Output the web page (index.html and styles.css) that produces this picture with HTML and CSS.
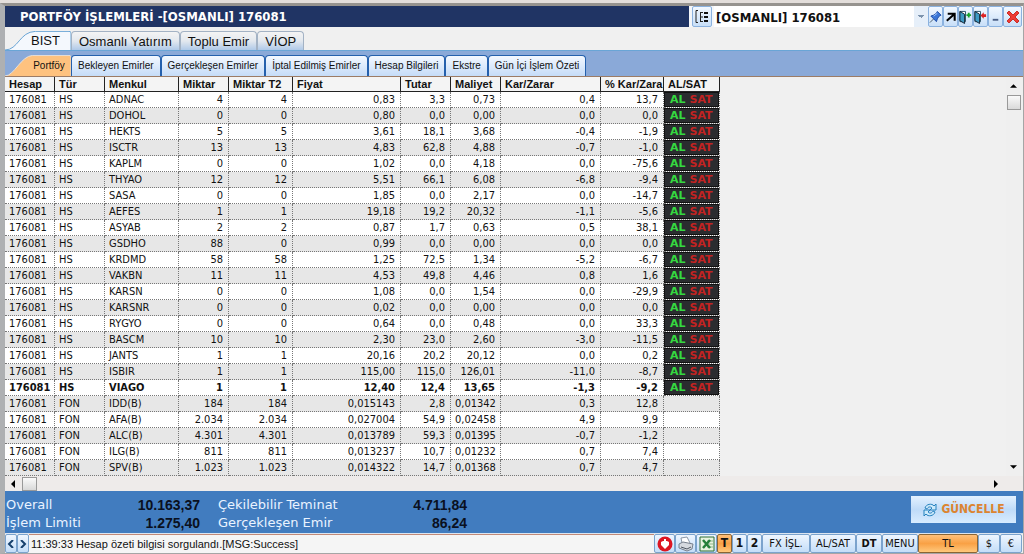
FILE: index.html
```html
<!DOCTYPE html>
<html lang="tr">
<head>
<meta charset="utf-8">
<title>Portföy İşlemleri</title>
<link rel="stylesheet" href="styles.css">
</head>
<body>
<main class="window">
  <header class="titlebar">
    <h1 class="title">PORTFÖY İŞLEMLERİ -[OSMANLI] 176081</h1>
    <button class="tool tree" aria-label="Hesap listesi"><svg viewBox="0 0 14 14" width="14" height="14"><path d="M3 .5H1v12h2M5 2.500h3M5 7h3M5 11.500h3M5.500 2v10" fill="none" stroke="#222"/><path d="M9 3h4M9 7h4M9 11h4" stroke="#111" stroke-width="2"/></svg></button>
    <select class="account" aria-label="Hesap"><option>[OSMANLI] 176081</option></select>
    <button class="tool" aria-label="Sabitle"><svg viewBox="0 0 14 16" width="13" height="16"><path d="M1 14l4-4" stroke="#456"/><path d="M2 7l3-1 3-2 1-2 4 4-2 1-2 3-1 3z" fill="#3a76d8" stroke="#1c4ba5"/><path d="M5 7l4-3" stroke="#a8ccff"/></svg></button>
    <button class="tool" aria-label="Ayır"><svg viewBox="0 0 14 16" width="13" height="16"><path d="M3 12l8-7M4 4.500h7.500V12" fill="none" stroke="#000" stroke-width="2.200"/></svg></button>
    <button class="tool" aria-label="Giriş"><svg viewBox="0 0 14 16" width="13" height="16"><path d="M1 2h6v11H1z" fill="#fff" stroke="#244e63"/><path d="M1 2l5 3v10l-5-3z" fill="#3f9bc4" stroke="#123"/><path d="M8 6h5M10.500 3.500v5" stroke="#15a32a" stroke-width="2"/></svg></button>
    <button class="tool" aria-label="Çıkış"><svg viewBox="0 0 14 16" width="13" height="16"><path d="M1 2h6v11H1z" fill="#fff" stroke="#244e63"/><path d="M1 2l5 3v10l-5-3z" fill="#3f9bc4" stroke="#123"/><path d="M10.500 3L7 6.500l3.500 3.500V8H13V5h-2.500z" fill="#d22"/></svg></button>
    <button class="tool" aria-label="Küçült"><svg viewBox="0 0 14 16" width="13" height="16"><path d="M4 11h6" stroke="#4a5f86" stroke-width="2"/></svg></button>
    <button class="tool close" aria-label="Kapat"><svg viewBox="0 0 16 16" width="16" height="16"><path d="M2 4l2-2 4 4 4-4 2 2-4 4 4 4-2 2-4-4-4 4-2-2 4-4z" fill="#ee3b35" stroke="#c8302b"/></svg></button>
  </header>
  <nav class="tabs">
    <button class="tab current"><svg class="slant" viewBox="0 0 100 100" preserveAspectRatio="none"><path d="M0 100C20 100 22 4 46 2H97Q100 2 100 10V100"/></svg><span>BIST</span></button>
    <button class="tab">Osmanlı Yatırım</button>
    <button class="tab">Toplu Emir</button>
    <button class="tab">VİOP</button>
  </nav>
  <nav class="subtabs">
    <button class="sub current"><svg class="slant" viewBox="0 0 100 100" preserveAspectRatio="none"><path d="M0 100C14 100 24 4 42 2H97Q100 2 100 10V100"/></svg><span>Portföy</span></button>
    <button class="sub">Bekleyen Emirler</button>
    <button class="sub">Gerçekleşen Emirler</button>
    <button class="sub">İptal Edilmiş Emirler</button>
    <button class="sub">Hesap Bilgileri</button>
    <button class="sub">Ekstre</button>
    <button class="sub">Gün İçi İşlem Özeti</button>
  </nav>
  <section class="grid">
    <div class="sheet">
      <table>
        <colgroup><col class="w50"><col class="w50"><col class="w74"><col class="w50"><col class="w64"><col class="w108"><col class="w50"><col class="w50"><col class="w100"><col class="w63"><col class="w56"></colgroup>
        <thead><tr><th>Hesap</th><th>Tür</th><th>Menkul</th><th>Miktar</th><th>Miktar T2</th><th>Fiyat</th><th>Tutar</th><th>Maliyet</th><th>Kar/Zarar</th><th>% Kar/Zara</th><th>AL/SAT</th></tr></thead>
        <tbody id="rows"></tbody>
      </table>
    </div>
    <div class="vscroll"><svg class="arrow" viewBox="0 0 8 5"><path d="M0 5l4-4 4 4z"/></svg><i class="thumb"></i><svg class="arrow end" viewBox="0 0 8 5"><path d="M0 0l4 4 4-4z"/></svg></div>
  </section>
  <div class="hscroll"><svg class="side" viewBox="0 0 5 8"><path d="M5 0L1 4l4 4z"/></svg><i class="thumb"></i><svg class="side end" viewBox="0 0 5 8"><path d="M0 0l4 4-4 4z"/></svg></div>
  <section class="summary">
    <dl>
      <dt>Overall</dt><dd>10.163,37</dd><dt>Çekilebilir Teminat</dt><dd>4.711,84</dd>
      <dt>İşlem Limiti</dt><dd>1.275,40</dd><dt>Gerçekleşen Emir</dt><dd>86,24</dd>
    </dl>
    <button class="refresh"><svg viewBox="0 0 16 16" width="16" height="16"><path d="M3 6c1-4 7-5 9-2l2-2v6H8l2-2C8 4 6 5 5 7zM13 10c-1 4-7 5-9 2l-2 2V8h6l-2 2c2 2 4 1 5-1z" fill="#cdeafb" stroke="#2380bd"/></svg>GÜNCELLE</button>
  </section>
  <footer class="status">
    <button class="nav" aria-label="Önceki"><svg viewBox="0 0 8 8" width="8" height="8"><path d="M6 0L2 4l4 4" fill="none" stroke="#16406c" stroke-width="2"/></svg></button>
    <button class="nav" aria-label="Sonraki"><svg viewBox="0 0 8 8" width="8" height="8"><path d="M2 0l4 4-4 4" fill="none" stroke="#16406c" stroke-width="2"/></svg></button>
    <output class="message">11:39:33 Hesap özeti bilgisi sorgulandı.[MSG:Success]</output>
    <button class="b w21" aria-label="Bildirim"><svg viewBox="0 0 16 16" width="16" height="16"><circle cx="8" cy="8" r="7.500" fill="#dd1522"/><path d="M8 13L4 9V6l2-1h1V3h2v2h1l2 1v3z" fill="#fff"/></svg></button>
    <button class="b w21" aria-label="Yazdır"><svg viewBox="0 0 16 16" width="16" height="16"><path d="M4 7L3 2l6-1 3 6" fill="#fff" stroke="#8b96a5"/><path d="M1 8l4-2 10 2-1 5-5 2-8-3z" fill="#d5d9df" stroke="#77808d"/><path d="M3 11l6 2 4-2" fill="none" stroke="#4d5560"/></svg></button>
    <button class="b w21" aria-label="Excel"><svg viewBox="0 0 16 16" width="16" height="16"><path d="M1 1h14v14H1z" fill="#e8f3df" stroke="#2f6e35"/><path d="M8 5h6M8 8h6M8 11h6" stroke="#8db68a"/><path d="M4 4l7 8M11 4l-7 8" stroke="#26803a" stroke-width="2.500"/></svg></button>
    <button class="b num on">T</button>
    <button class="b num">1</button>
    <button class="b num">2</button>
    <button class="b w48">FX İŞL.</button>
    <button class="b w46">AL/SAT</button>
    <button class="b w26 bold">DT</button>
    <button class="b w36">MENU</button>
    <button class="b w60 on">TL</button>
    <button class="b w22">$</button>
    <button class="b w22">€</button>
  </footer>
</main>
<script src="rows.js"></script>
</body>
</html>
```
FILE: styles.css
```css
* { box-sizing: border-box; }
body { margin: 0; padding-top: 3px; background: #e3dedb; color: #111; font: 11px/15px "DejaVu Sans Condensed", "Open Sans", sans-serif; }
button, select, output { font: inherit; color: inherit; }
button { padding: 0; border: 0; background: none; white-space: nowrap; }
.window { display: flex; flex-direction: column; min-height: calc(100vh - 3px); border: 1px solid #a5a5a5; border-top: 3px solid #96938f; border-left: 5px solid #aeb0b2; background: #f0f0f0; }

.titlebar { display: flex; height: 21px; padding-right: 1px; background: #f4f6f9; }
.title { flex: 1; margin: 0; padding-left: 15px; background: #203464; color: #fff; font: bold 13px/22px "DejaVu Sans Condensed", sans-serif; white-space: nowrap; }
.tool { display: grid; place-items: center; width: 15px; border: 1px solid #8bb2df; border-radius: 2px; background: linear-gradient(#f2f8ff, #c8dff8); }
.tool.tree { width: 20px; margin: 0 2px 0 3px; }
.tool.close { width: 19px; }
.account { width: 214px; padding: 1px 14px 0 2px; border: 0; border-radius: 0; appearance: none; font-weight: bold; font-size: 13px;
  background: conic-gradient(from -45deg at 50% 100%, #7c93ad 90deg, transparent 0) right 4px center / 6px 3px no-repeat, linear-gradient(#e6eff9, #e6eff9) right / 14px 100% no-repeat, #fff; }

.tabs { display: flex; height: 24px; padding-top: 4px; border-bottom: 1px solid #69a5d6; font: 13px/20px "Liberation Sans", sans-serif; }
.tab { padding: 0 7px; border: 1px solid #a3b2c4; border-bottom: 0; border-radius: 4px 4px 0 0; background: linear-gradient(#f4f4f4, #e3e8ee 50%, #afc9e8); }
.slant { position: absolute; inset: 0; width: 100%; height: 100%; }
.slant path { stroke: #69a5d6; vector-effect: non-scaling-stroke; fill: #f4f8fd; }
.current { position: relative; border: 0; background: none; }
.current span { position: relative; }
.tab.current { width: 66px; padding: 0 0 0 15px; }
.subtabs { display: flex; height: 26px; padding-top: 4px; background: #8aa9d8; border-bottom: 1px solid #9c7c66; font: 10px/20px "Liberation Sans", sans-serif; }
.sub { padding: 0 6px; border: 1px solid #2460ad; border-bottom: 0; border-radius: 4px 4px 0 0; background: linear-gradient(#f3f8ff, #c5dcf8); }
.sub.current { width: 66px; padding: 0 0 0 22px; border: 0; background: none; }
.sub .slant path { fill: #fec27f; stroke: #e8e1da; }

.grid { display: flex; flex: 1; }
.sheet { flex: 1; min-width: 0; }
table { width: 715px; table-layout: fixed; border-collapse: separate; border-spacing: 0; }
.w50 { width: 50px; } .w74 { width: 74px; } .w64 { width: 64px; } .w108 { width: 108px; } .w100 { width: 100px; } .w63 { width: 63px; } .w56 { width: 56px; }
th { height: 15px; padding: 0 0 0 4px; border-right: 1px solid #222; border-bottom: 1px solid #222; background: #f4f4f4; white-space: nowrap; text-align: left; font: bold 11px/14px "Liberation Sans", sans-serif; }
td { height: 16px; padding: 0 5px 0 4px; border-right: 1px dotted #777; border-bottom: 1px dotted #777; background: #fff; white-space: nowrap; text-align: right; }
td:nth-child(-n+3) { text-align: left; padding-right: 0; }
tr:nth-child(even) td { background: #e7e7e7; }
.bold td, .bold { font-weight: bold; }
td.trade { padding: 0; }
.deal { display: flex; gap: 4px; height: 15px; padding-left: 5px; border: 1px solid #111; background: #2a2c2f; font: 11px/13px "DejaVu Sans", sans-serif; }
.buy { color: #35d940; font-weight: bold; }
.sell { color: #c32322; font-weight: bold; }
.vscroll { display: flex; flex-direction: column; align-items: center; width: 17px; padding: 6px 2px 6px 0; background: #efefef; }
.arrow { width: 7px; height: 5px; }
.side { width: 5px; height: 8px; }
.thumb { border: 1px solid #999; background: linear-gradient(#fafafa, #d9d9d9); }
.vscroll .thumb { width: 14px; height: 15px; margin-top: 7px; }
.vscroll .end { margin-top: auto; }
.hscroll { display: flex; align-items: center; height: 15px; padding: 0 24px 0 5px; background: #eeebea; }
.hscroll .thumb { width: 15px; height: 14px; margin-left: 7px; }
.hscroll .end { margin-left: auto; }

.summary { display: flex; justify-content: space-between; align-items: flex-start; height: 43px; padding: 5px 7px 0 1px; background: #417cbf; border-bottom: 1px solid #dbe5f1; }
dl { display: grid; grid-template-columns: 112px 82px 144px 123px; margin: 0; font: 13px/18px "DejaVu Sans", sans-serif; color: #eaf3ff; }
dt:nth-of-type(even) { padding-left: 18px; white-space: nowrap; }
dd { margin: 0; text-align: right; color: #0a1020; font: bold 14px/18px "Liberation Sans", sans-serif; }
.refresh { display: flex; justify-content: center; align-items: center; gap: 3px; width: 105px; height: 27px; background: linear-gradient(#e3f1ff, #bfdbf8 50%, #d8ecff); color: #dc8430; font-weight: bold; font-size: 12px; }

.status { display: flex; height: 19px; padding-right: 1px; background: #f0f0f0; }
.nav, .b { display: grid; place-items: center; border: 1px solid #7ba3cd; border-radius: 2px; background: linear-gradient(#eef6ff, #c4ddf8); }
.nav { width: 12px; }
.message { flex: 1; padding-left: 2px; border-top: 1px solid #c28a78; background: #f5f5f5; font: 11px/18px "Liberation Sans", sans-serif; white-space: nowrap; }
.num { width: 15px; font-weight: bold; font-size: 12px; }
.on { border-color: #8a6535; background: linear-gradient(#ffc07a, #f9a145 50%, #ffc87c); }
.w21 { width: 21px; } .w48 { width: 48px; } .w46 { width: 46px; } .w26 { width: 26px; } .w36 { width: 36px; } .w60 { width: 60px; } .w22 { width: 22px; }
```
FILE: rows.js
```js
const data = `HS|ADNAC|4|4|0,83|3,3|0,73|0,4|13,7
HS|DOHOL|0|0|0,80|0,0|0,00|0,0|0,0
HS|HEKTS|5|5|3,61|18,1|3,68|-0,4|-1,9
HS|ISCTR|13|13|4,83|62,8|4,88|-0,7|-1,0
HS|KAPLM|0|0|1,02|0,0|4,18|0,0|-75,6
HS|THYAO|12|12|5,51|66,1|6,08|-6,8|-9,4
HS|SASA|0|0|1,85|0,0|2,17|0,0|-14,7
HS|AEFES|1|1|19,18|19,2|20,32|-1,1|-5,6
HS|ASYAB|2|2|0,87|1,7|0,63|0,5|38,1
HS|GSDHO|88|0|0,99|0,0|0,00|0,0|0,0
HS|KRDMD|58|58|1,25|72,5|1,34|-5,2|-6,7
HS|VAKBN|11|11|4,53|49,8|4,46|0,8|1,6
HS|KARSN|0|0|1,08|0,0|1,54|0,0|-29,9
HS|KARSNR|0|0|0,02|0,0|0,00|0,0|0,0
HS|RYGYO|0|0|0,64|0,0|0,48|0,0|33,3
HS|BASCM|10|10|2,30|23,0|2,60|-3,0|-11,5
HS|JANTS|1|1|20,16|20,2|20,12|0,0|0,2
HS|ISBIR|1|1|115,00|115,0|126,01|-11,0|-8,7
HS|VIAGO|1|1|12,40|12,4|13,65|-1,3|-9,2
FON|IDD(B)|184|184|0,015143|2,8|0,01342|0,3|12,8
FON|AFA(B)|2.034|2.034|0,027004|54,9|0,02458|4,9|9,9
FON|ALC(B)|4.301|4.301|0,013789|59,3|0,01395|-0,7|-1,2
FON|ILG(B)|811|811|0,013237|10,7|0,01232|0,7|7,4
FON|SPV(B)|1.023|1.023|0,014322|14,7|0,01368|0,7|4,7`;
const trade = '<div class="deal"><span class="buy">AL</span><span class="sell">SAT</span></div>';
document.getElementById("rows").innerHTML = data.split("\n").map(line => {
  const cells = line.split("|");
  return `<tr class="${cells[1] === "VIAGO" ? "bold" : ""}"><td>176081</td>` +
    cells.map(c => `<td>${c}</td>`).join("") +
    `<td class="trade">${cells[0] === "HS" ? trade : ""}</td></tr>`;
}).join("");
```
